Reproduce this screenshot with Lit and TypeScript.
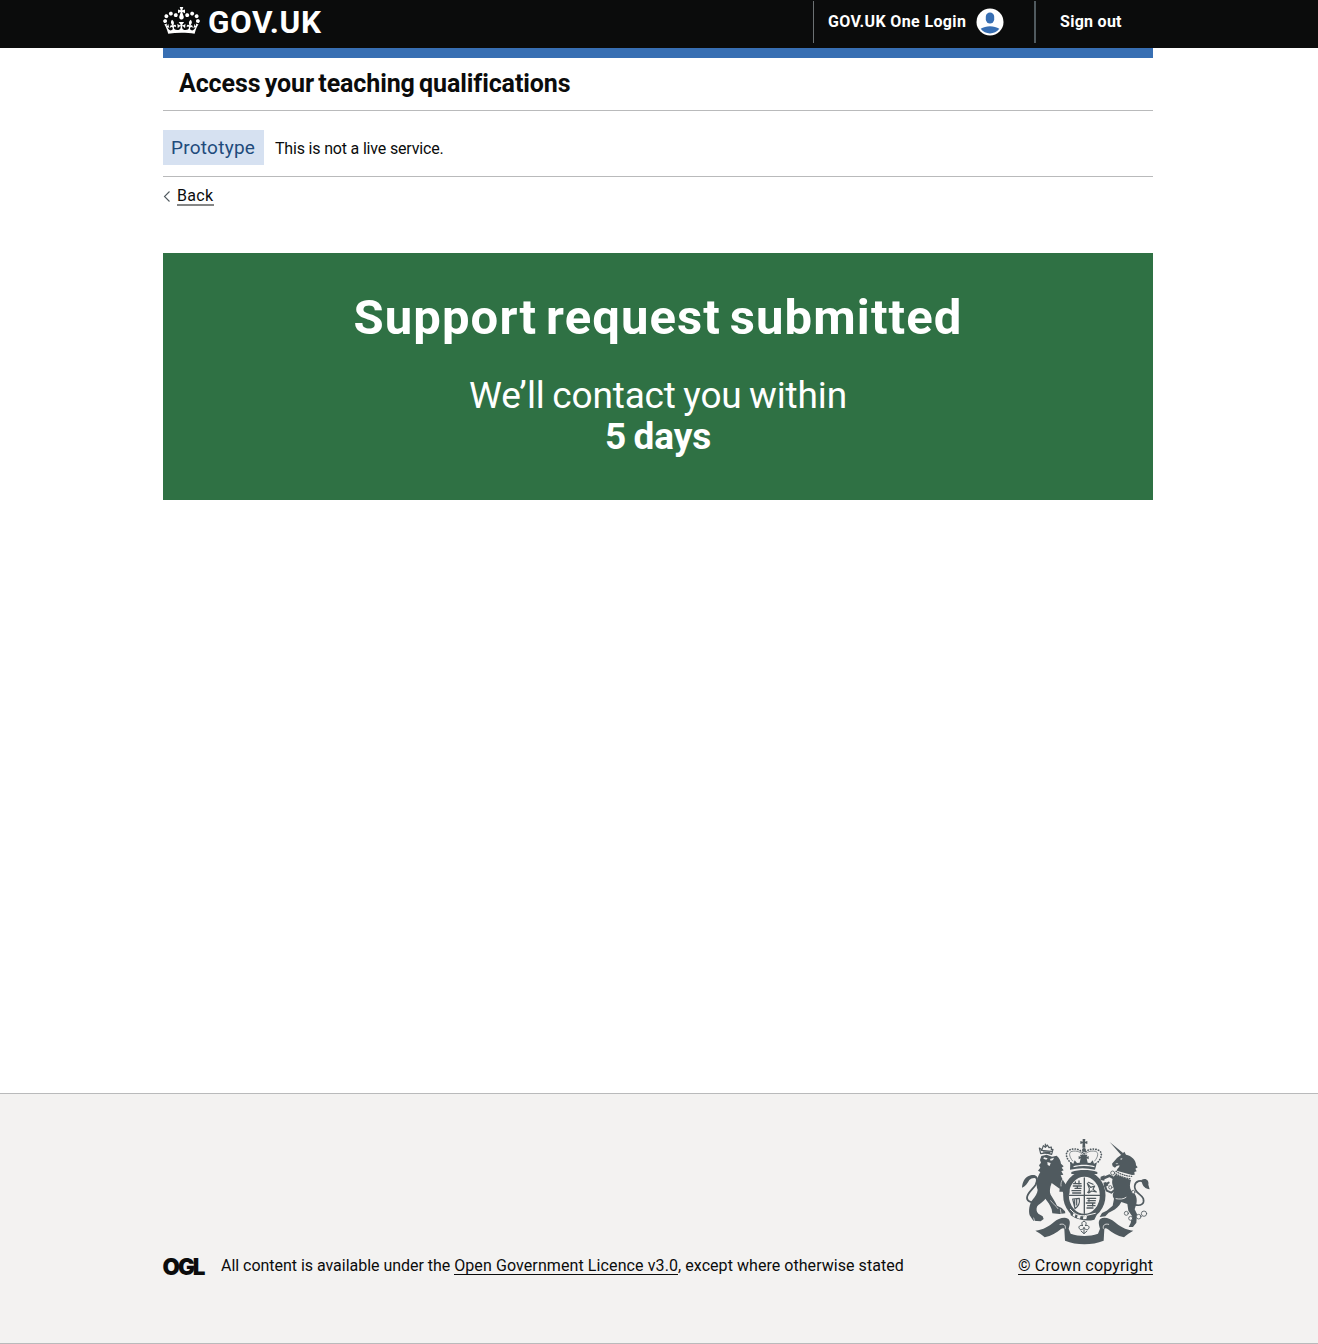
import { LitElement, html, css, svg } from "lit";
import { customElement } from "lit/decorators.js";

const crown = svg`<path d="M25 30.2c3.5 1.5 7.7-.2 9.1-3.7 1.5-3.6-.2-7.8-3.9-9.2-3.6-1.4-7.6.3-9.1 3.9-1.4 3.5.3 7.5 3.9 9zM9 39.5c3.6 1.5 7.8-.2 9.2-3.7 1.5-3.6-.2-7.8-3.9-9.1-3.6-1.5-7.6.2-9.1 3.8-1.4 3.5.3 7.5 3.8 9zM4.4 57.2c3.5 1.5 7.7-.2 9.1-3.8 1.5-3.6-.2-7.7-3.9-9.1-3.5-1.5-7.6.3-9.1 3.8-1.4 3.5.3 7.6 3.9 9.1zm38.3-21.4c3.5 1.5 7.7-.2 9.1-3.8 1.5-3.6-.2-7.7-3.9-9.1-3.6-1.5-7.6.3-9.1 3.8-1.3 3.6.4 7.7 3.9 9.1zm64.4-5.6c-3.6 1.5-7.8-.2-9.1-3.7-1.5-3.6.2-7.8 3.8-9.2 3.6-1.4 7.7.3 9.2 3.9 1.3 3.5-.4 7.5-3.9 9zm15.9 9.3c-3.6 1.5-7.7-.2-9.1-3.7-1.5-3.6.2-7.8 3.7-9.1 3.6-1.5 7.7.2 9.2 3.8 1.5 3.5-.3 7.5-3.8 9zm4.7 17.7c-3.6 1.5-7.8-.2-9.2-3.8-1.5-3.6.2-7.7 3.9-9.1 3.6-1.5 7.7.3 9.2 3.8 1.3 3.5-.4 7.6-3.9 9.1zM89.3 35.8c-3.6 1.5-7.8-.2-9.2-3.8-1.4-3.6.2-7.7 3.9-9.1 3.6-1.5 7.7.3 9.2 3.8 1.4 3.6-.3 7.7-3.9 9.1zM69.7 17.7l8.9 4.7V9.3l-8.9 2.8c-.2-.3-.5-.6-.9-.9L72.4 0H59.6l3.5 11.2c-.3.3-.6.5-.9.9l-8.8-2.8v13.1l8.8-4.7c.3.3.6.7.9.9l-5 15.4v.1c-.2.8-.4 1.6-.4 2.4 0 4.1 3.1 7.5 7 8.1h.2c.3 0 .7.1 1 .1.4 0 .7 0 1-.1h.2c4-.6 7.1-4.1 7.1-8.1 0-.8-.1-1.7-.4-2.4V34l-5.1-15.4c.4-.2.7-.6 1-.9zM66 92.8c16.9 0 32.8 1.1 47.1 3.2 4-16.9 8.9-26.7 14-33.5l-9.6-3.4c1 4.9 1.1 7.2 0 10.2-1.5-1.4-3-4.3-4.2-8.7L108.6 76c2.8-2 5-3.2 7.5-3.3-4.4 9.4-10 11.9-13.6 11.2-4.3-.8-6.3-4.6-5.6-7.9 1-4.7 5.7-5.9 8-.5 4.3-8.7-3-11.4-7.6-8.8 7.1-7.2 7.9-13.5 2.1-21.1-8 6.1-8.1 12.3-4.5 20.8-4.7-5.4-12.1-2.5-9.5 6.2 3.4-5.2 7.9-2 7.2 3.1-.6 4.3-6.4 7.8-13.5 7.2-10.3-.9-10.9-8-11.2-13.8 2.5-.5 7.1 1.8 11 7.3L80.2 60c-4.1 4.4-8 5.3-12.3 5.4 1.4-4.4 8-11.6 8-11.6H55.5s6.4 7.2 7.9 11.6c-4.2-.1-8-1-12.3-5.4l1.4 16.4c3.9-5.5 8.5-7.7 10.9-7.3-.3 5.8-.9 12.8-11.1 13.8-7.2.6-12.9-2.9-13.5-7.2-.7-5 3.8-8.3 7.1-3.1 2.7-8.7-4.6-11.6-9.4-6.2 3.7-8.5 3.6-14.7-4.6-20.8-5.8 7.6-5 13.9 2.2 21.1-4.7-2.6-11.9.1-7.7 8.8 2.3-5.5 7.1-4.2 8.1.5.7 3.3-1.3 7.1-5.7 7.9-3.5.7-9-1.8-13.5-11.2 2.5.1 4.7 1.3 7.5 3.3l-4.7-15.4c-1.2 4.4-2.7 7.2-4.3 8.7-1.1-3-.9-5.3 0-10.2l-9.5 3.4c5 6.9 9.9 16.7 14 33.5 14.8-2.1 30.8-3.2 47.7-3.2z"/>`;

@customElement("royal-arms")
export class RoyalArms extends LitElement {
  static styles = css`
    :host { display: block; width: 129px; height: 107px; }
    svg { display: block; }
    .solid { fill: #505a5f; }
    .gap { fill: #f3f2f1; }
    .line { fill: none; stroke: #505a5f; stroke-linecap: round; stroke-linejoin: round; }
    .cut { fill: none; stroke: #f3f2f1; stroke-linecap: round; stroke-linejoin: round; }
  `;
  render() {
    return html`<svg width="129" height="107" viewBox="33 27 387 321" aria-hidden="true">
      <!-- ribbon -->
      <path class="solid" d="M76 302C100 300 118 288 132 276C144 266 162 260 174 266C182 272 180 282 176 296L182 311C208 320 238 320 264 311L270 296C266 282 264 272 272 266C284 260 302 266 314 276C328 288 346 300 370 302C360 308 350 314 342 322C322 318 306 308 294 298C288 294 284 294 283 298L281 332C246 346 200 346 165 332L163 298C162 294 158 294 152 298C140 308 124 318 104 322C96 314 86 308 76 302z"/>
      <path class="cut" stroke-width="2.5" d="M150 283c12-3 18 3 16 12M296 283c-12-3-18 3-16 12"/>
      <!-- crown -->
      <path class="line" stroke-width="5" stroke-dasharray="1 7" d="M183 99c-14-12-20-32-5-39 16-7 34-2 43 12 9-14 29-19 45-11 14 7 8 26-5 38"/>
      <path class="line" stroke-width="2" d="M188 93c-12-14-12-27-2-29 14-3 28 2 35 14 7-12 21-17 35-14 10 2 10 15-2 29"/>
      <path class="solid" d="M218 27h8l-1 8 7-2v9l-7-2 1 13h-9l1-13-7 2v-9l7 2zM181 97l9 4 4-10 7 8 8-1 3-13-6 3v-10l6 3-2-7h22l-2 7 6-3v10l-6-3 3 13 8 1 7-8 4 10 9-4-6 22c-25-6-50-6-75 0z"/>
      <circle class="solid" cx="222" cy="60" r="6"/>
      <path class="gap" d="M190 109c20-6 44-6 64 0l-1 3c-20-5-42-5-62 0z"/>
      <!-- garter and shield -->
      <ellipse class="gap" cx="223" cy="196" rx="67" ry="76"/>
      <ellipse class="line" cx="223" cy="196" rx="55" ry="64" stroke-width="17"/>
      <path class="solid" d="M184 126c24-8 54-8 78 0v6h-78z"/>
      <path class="line" stroke-width="4" d="M223 144v106M177 196h92"/>
      <path class="line" stroke-width="4" d="M191 161h22M190 168h24M195 175h18M186 182h26M188 189h24M196 156v5M207 153v9M202 168v6M231 205h26M234 212h22M229 219h26M233 227h22M231 234h18M237 209v5M248 221v7"/>
      <path class="line" stroke-width="3.5" d="M232 160l10 12 12-4-5 10 10 8-14-3-9 6 2-13zM188 207l20-2c2 15-4 25-13 31zM194 208v20M200 207v18M233 187l6-5M235 157l14 6"/>
      <path class="solid" d="M181 240c12 17 29 23 48 20l31-5-7 14c-20 5-40 2-57-5l-14-8z"/>
      <path class="gap" d="M190 250l7 3-3 8-6-4zM203 255l9 2-2 9-9-2zM220 259l11-1-2 9-10 1z"/>
      <path class="cut" stroke-width="3" d="M181 238c14 17 30 22 49 18l26-6"/>
      <g transform="translate(24 16)">
        <!-- lion -->
        <path class="solid" d="M70 62L86 58L102 64L116 61C124 68 128 76 129 85L137 93L131 97L137 105L130 108L136 118L128 120C133 132 140 145 149 154C155 158 156 168 154 176L148 181L144 173L138 178L134 169L124 169L125 160L101 143C95 158 94 170 98 178C106 190 112 200 117 211L131 218L141 228L142 234L125 236L103 234L101 222C96 208 90 200 82 190C76 200 62 206 57 214C54 222 56 230 61 235L74 243L77 251L68 258L46 256L35 240C31 226 34 206 43 194C52 184 58 174 59 164C52 144 58 126 67 110L60 106L67 97L63 90L69 82L66 74z"/>
        <path class="gap" d="M78 66l11 3-4 4-9-3zM96 71l12-4-3 7-7 2zM88 80l10 3-3 9-6-3zM102 161c8-5 14-3 17 3l6 14c-8-8-14-12-23-12z"/>
        <path class="line" stroke-width="5.5" d="M58 196C44 204 28 200 27 188C26 174 44 162 53 148C60 136 58 122 44 122C34 123 28 134 20 142"/>
        <path class="solid" d="M12 157C13 140 20 126 34 121C46 116 57 120 60 130C50 126 40 127 34 134C28 144 22 154 12 157z"/>
        <path class="cut" stroke-width="2" d="M62 224c2 8 8 14 14 18M98 196c6 10 16 14 22 24M134 132c-4 6-6 12-5 20M47 248l3 10M127 222l2 12"/>
        <path class="line" stroke-width="3.5" d="M68 55l-4-17 8 5 4-12 6 5 6-7 5 8 7-2 0 8 5-1-4 15c-12-4-22-5-33-2zM82 31v-5M70 45l30 3M76 50l20 2"/>
        <!-- unicorn -->
        <g transform="translate(198 0)">
          <path class="solid" d="M77 20L118 54L112 60z"/>
          <path class="solid" d="M84 85L99 68L112 58L121 49L126 58C142 61 157 74 156 90L161 96L154 100L158 108L151 110L152 118L144 119L98 106C100 98 108 96 106 90L98 92L93 97L86 93z"/>
          <path class="gap" d="M110 69l6 1-6 4zM94 85l9-2-4 4z"/>
          <path class="line" stroke-width="4" stroke-dasharray="2 5" d="M96 108c13 8 28 14 47 15M96 116c14 8 28 13 43 14"/>
          <path class="solid" d="M94 118L141 134C137 146 136 156 142 166C156 174 161 190 157 206L152 222L159 236L157 262L147 275L134 275L140 263L144 242L133 226L130 206L112 200C104 214 96 222 84 227L74 232L64 243L47 245L54 233L68 226L86 211L90 190C84 182 86 174 91 166L86 150C82 136 86 126 94 118z"/>
          <path class="line" stroke-width="8" d="M92 130L76 121L60 128"/>
          <path class="line" stroke-width="6" d="M94 162L82 172L68 166L62 149L74 142"/>
          <path class="solid" d="M62 120l-12 4-1 10 12 2zM58 142l8-2 8 10-12 6z"/>
          <path class="line" stroke-width="5" d="M152 208C172 214 182 204 178 190C172 176 150 172 152 152C154 136 172 132 180 142"/>
          <path class="solid" d="M172 134C184 126 196 134 193 148L197 162C184 160 176 152 174 142z"/>
          <g class="line" stroke-width="2.5">
            <circle class="gap" cx="86" cy="113" r="6"/><circle cx="79" cy="156" r="5"/><circle class="gap" cx="148" cy="170" r="5"/>
            <circle class="gap" cx="127" cy="234" r="6"/><circle class="gap" cx="140" cy="249" r="6"/><circle class="gap" cx="164" cy="244" r="7"/><circle class="gap" cx="180" cy="235" r="8"/>
          </g>
          <path class="cut" stroke-width="2.5" d="M96 190c12 2 22 2 30-4"/>
        </g>
      </g>
      <!-- thistle pendant -->
      <path class="line" stroke-width="3" d="M222 274c8 0 8 10 3 13 9-3 15 3 11 9-4 5-11 3-14-3-3 6-10 8-14 3-4-6 2-12 11-9-5-3-5-13 3-13zM222 292v18M213 303l9 8 9-8"/>
    </svg>`;
  }
}

@customElement("app-root")
export class AppRoot extends LitElement {
  static styles = css`
    :host {
      display: flex; flex-direction: column; height: 1344px; background: #fff; color: #0b0c0c;
      font-family: Roboto, "Liberation Sans", sans-serif; font-size: 16px; line-height: 20px;
    }
    * { box-sizing: border-box; }
    .width { width: 990px; margin-left: 163px; }
    svg { display: block; flex: none; }
    .bar { background: #0b0c0c; height: 48px; color: #fff; }
    .bar .width { display: flex; height: 48px; }
    .crown { margin-top: 7px; fill: #fff; }
    .logo { font-size: 31.5px; line-height: 46px; font-weight: 700; margin-left: 8px; letter-spacing: 0.6px; white-space: nowrap; }
    .nav { display: flex; margin: 1px 0 0 auto; height: 42px; width: 340px; font-weight: 700; line-height: 41px; white-space: nowrap; }
    .account { display: flex; width: 221px; border-left: 1px solid #6c7173; padding-left: 14px; }
    .account svg { margin: 7px 0 0 10px; }
    .one { letter-spacing: 0.36px; }
    .out { border-left: 2px solid #505a5f; padding-left: 24px; letter-spacing: 0.28px; }
    .service { height: 63px; border-top: 10px solid #386fb3; border-bottom: 1px solid #b9babb; padding-left: 16px; font-size: 25px; line-height: 51px; letter-spacing: -0.1px; word-spacing: -1.8px; font-weight: 700; white-space: nowrap; }
    .phase { display: flex; height: 66px; border-bottom: 1px solid #b9babb; padding-top: 19px; white-space: nowrap; }
    .tag { width: 101px; height: 35px; background: #d6e1f1; color: #1f4b7c; font-size: 19px; line-height: 35px; padding-left: 8px; letter-spacing: 0.25px; }
    .note { line-height: 37px; margin-left: 11px; letter-spacing: -0.18px; }
    .back { display: flex; align-items: flex-start; padding-top: 9px; height: 76px; }
    .back svg { margin-top: 4px; }
    .link { border-bottom: 1px solid #0b0c0c; white-space: nowrap; }
    .back .link { margin-left: 6px; border-bottom: 2px solid #858686; line-height: 20px; height: 20px; letter-spacing: 0.35px; }
    .panel { height: 247px; background: #2f7144; color: #fff; text-align: center; padding-top: 37px; }
    h1 { margin: 0; font-size: 49px; line-height: 56px; font-weight: 700; letter-spacing: 1.1px; word-spacing: -4.5px; }
    .body { margin-top: 29px; font-size: 37px; line-height: 41px; letter-spacing: -0.15px; word-spacing: -1.5px; }
    .footer { margin-top: auto; height: 251px; border-top: 1px solid #b9babb; border-bottom: 1px solid #b9babb; background: #f3f2f1; }
    .footer .width { display: flex; align-items: flex-end; height: 181px; }
    .footer span { height: 20px; line-height: 21px; }
    .licence { margin-left: 15px; display: flex; white-space: pre; }
    .licence .link { white-space: pre; letter-spacing: 0.1px; }
    .before { letter-spacing: -0.03px; }
    .after { letter-spacing: 0.05px; }
    .ogl { overflow: visible; }
    .copyright { margin-left: auto; width: 135px; display: flex; flex-direction: column; align-items: center; gap: 9px; }
    .copyright .link { letter-spacing: 0.15px; }
  `;
  render() {
    return html`
      <header class="bar"><div class="width">
        <svg class="crown" width="37" height="27" viewBox="0 0 132 97">${crown}</svg>
        <span class="logo">GOV.UK</span>
        <nav class="nav">
          <div class="account"><span class="one">GOV.UK One Login</span>
            <svg width="28" height="28" viewBox="0 0 28 28"><circle cx="14" cy="14" r="13.5" fill="#fff"/><rect x="9.8" y="4.5" width="8.4" height="11" rx="4.2" fill="#386fb3"/><path d="M4.7 20.8c5-3.5 13.6-3.5 18.6 0-4.3 6.2-14.3 6.2-18.6 0z" fill="#386fb3"/></svg>
          </div>
          <div class="out">Sign out</div>
        </nav>
      </div></header>
      <div class="width service">Access your teaching qualifications</div>
      <div class="width phase"><span class="tag">Prototype</span><span class="note">This is not a live service.</span></div>
      <div class="width back"><svg width="8" height="13" viewBox="0 0 8 13"><path d="M6.5 1.5l-5 5 5 5" fill="none" stroke="#505a5f" stroke-width="1.1"/></svg><span class="link">Back</span></div>
      <main class="width panel"><h1>Support request submitted</h1>
        <div class="body">We’ll contact you within<br /><b>5 days</b></div></main>
      <footer class="footer"><div class="width">
        <svg class="ogl" width="43" height="20" viewBox="0 0 43 20"><text x="-0.5" y="19.5" textLength="41" lengthAdjust="spacingAndGlyphs" font-family="Inter" font-weight="900" font-size="22.5" letter-spacing="-2" fill="#0b0c0c">OGL</text></svg>
        <div class="licence"><span class="before">All content is available under the </span><span class="link">Open Government Licence v3.0</span><span class="after">, except where otherwise stated</span></div>
        <div class="copyright"><royal-arms></royal-arms><span class="link">© Crown copyright</span></div>
      </div></footer>`;
  }
}
